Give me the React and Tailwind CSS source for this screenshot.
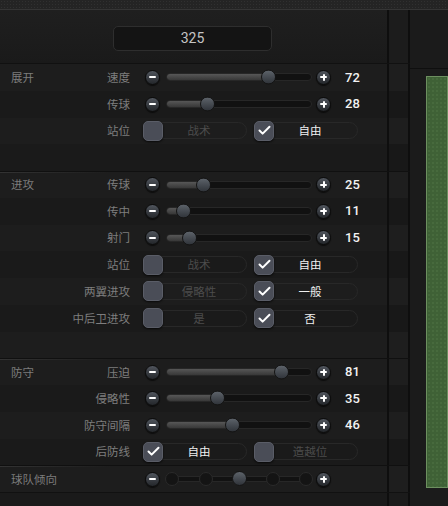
import { Check } from 'lucide-react';

const CJK = { fontFamily: '"Noto Sans CJK SC", "Noto Sans", sans-serif' };

function RoundBtn({ plus }) {
  return (
    <div className="relative w-[15px] h-[15px] rounded-full border border-[#0b0b0b] bg-gradient-to-b from-[#50555d] to-[#24272b] shadow-[0_1px_1px_rgba(0,0,0,0.6)] flex items-center justify-center shrink-0">
      <span className="absolute w-[7px] h-[2px] bg-white rounded-[1px]" />
      {plus && <span className="absolute w-[2px] h-[7px] bg-white rounded-[1px]" />}
    </div>
  );
}

function Slider({ value }) {
  const c = 2 + value * 1.4;
  return (
    <div className="flex items-center">
      <RoundBtn />
      <div className="relative ml-[6px] w-[146px] h-[8px] rounded-full bg-[#111] border border-[#272727]">
        <div className="absolute left-0 top-0 bottom-0 rounded-full bg-gradient-to-b from-[#575757] to-[#383838]" style={{ width: c }} />
        <div
          className="absolute top-1/2 -translate-y-1/2 w-[15px] h-[15px] rounded-full border border-[#141414] bg-gradient-to-b from-[#5d636a] to-[#30343a]"
          style={{ left: c - 8.5 }}
        />
      </div>
      <div className="ml-[4px]"><RoundBtn plus /></div>
      <span className="ml-[14px] text-[13px] font-medium text-[#f2f2f2]" style={{ fontFamily: 'Roboto, "Liberation Sans", sans-serif' }}>{value}</span>
    </div>
  );
}

function Option({ text, on }) {
  return (
    <div className="relative w-[104px] h-[20px] flex items-center">
      <div className="absolute inset-x-0 top-[1.5px] h-[17px] rounded-full border border-[#282828]" />
      <div className="relative w-[20px] h-[20px] rounded-[5px] bg-[#4a4d57] border border-[#5a5d67] shadow-[0_1px_2px_rgba(0,0,0,0.7)] flex items-center justify-center">
        {on && <Check size={15} strokeWidth={3.2} className="text-white" />}
      </div>
      <span className={`absolute left-[8px] right-0 text-center text-[11.5px] ${on ? 'text-[#f0f0f0]' : 'text-[#4c4c4c]'}`}>{text}</span>
    </div>
  );
}

function Toggle({ a, b, first }) {
  return (
    <div className="flex items-center gap-[7px] -ml-[2px]">
      <Option text={a} on={first} />
      <Option text={b} on={!first} />
    </div>
  );
}

function Tendency() {
  const dots = [6, 40, 73, 107, 140];
  return (
    <div className="flex items-center">
      <RoundBtn />
      <div className="relative ml-[6px] w-[146px] h-[15px]">
        <div className="absolute left-[6px] right-[6px] top-1/2 -translate-y-1/2 h-[6px] bg-[#121212] border-y border-[#272727]" />
        {dots.map(d => (
          <div key={d} className="absolute top-0 w-[14px] h-[14px] rounded-full bg-[#141414] border border-[#2a2a2a]" style={{ left: d - 7 }} />
        ))}
        <div className="absolute -top-[0.5px] w-[15px] h-[15px] rounded-full border border-[#141414] bg-gradient-to-b from-[#5d636a] to-[#30343a]" style={{ left: 73 - 7.5 }} />
      </div>
      <div className="ml-[4px]"><RoundBtn plus /></div>
    </div>
  );
}

function Row({ group, label, children, dark, top }) {
  return (
    <div className={`flex h-[26.75px] shrink-0 ${top ? 'border-t border-[#101010]' : ''}`}>
      <div className={`relative w-[387px] flex items-center ${dark ? 'bg-[#1a1a1a]' : 'bg-[#1d1d1d]'}`}>
        {top && <div className="absolute left-0 top-0 w-[110px] h-px bg-gradient-to-r from-[#333] to-transparent" />}
        <div className="w-[130px] flex items-center justify-between pl-[11px] text-[11.5px]">
          <span className="text-[#7c7c7c]">{group}</span>
          <span className="text-[#7e7e7e]">{label}</span>
        </div>
        <div className="ml-[15px]">{children}</div>
      </div>
      <div className={`w-[23px] border-x-2 border-[#0e0e0e] ${dark ? 'bg-[#181818]' : 'bg-[#1e1e1e]'}`} />
    </div>
  );
}

export default function App() {
  return (
    <div className="w-[448px] h-[506px] overflow-hidden bg-[#1b1b1b] flex flex-col" style={CJK}>
      <div className="h-[10px] bg-[#242424] bg-[radial-gradient(#303030_1px,transparent_1px)] bg-[length:3px_3px] border-b border-[#353535] shrink-0" />
      <div className="flex flex-1">
        <div className="w-[410px] flex flex-col">
          <div className="flex h-[54px] shrink-0 border-b border-[#111]">
            <div className="w-[387px] bg-gradient-to-b from-[#1f1f1f] to-[#1a1a1a] pt-[16px] pl-[113px]">
              <div className="w-[159px] h-[25px] rounded-[5px] bg-[#141414] border border-[#2e2e2e] flex items-center justify-center text-[14px] text-[#c4c4c4]" style={{ fontFamily: 'Roboto, "Liberation Sans", sans-serif' }}>325</div>
            </div>
            <div className="w-[23px] border-x-2 border-[#0e0e0e] bg-[#1c1c1c]" />
          </div>

          <Row group="展开" label="速度"><Slider value={72} /></Row>
          <Row label="传球" dark><Slider value={28} /></Row>
          <Row label="站位"><Toggle a="战术" b="自由" /></Row>
          <Row dark />

          <Row group="进攻" label="传球" top><Slider value={25} /></Row>
          <Row label="传中" dark><Slider value={11} /></Row>
          <Row label="射门"><Slider value={15} /></Row>
          <Row label="站位" dark><Toggle a="战术" b="自由" /></Row>
          <Row label="两翼进攻"><Toggle a="侵略性" b="一般" /></Row>
          <Row label="中后卫进攻" dark><Toggle a="是" b="否" /></Row>
          <Row />

          <Row group="防守" label="压迫" top><Slider value={81} /></Row>
          <Row label="侵略性" dark><Slider value={35} /></Row>
          <Row label="防守间隔"><Slider value={46} /></Row>
          <Row label="后防线" dark><Toggle a="自由" b="造越位" first /></Row>

          <Row group="球队倾向" top><Tendency /></Row>
          <div className="flex flex-1 border-t border-[#111]">
            <div className="w-[387px] bg-[#1a1a1a]" />
            <div className="w-[23px] border-x-2 border-[#0e0e0e] bg-[#1b1b1b]" />
          </div>
        </div>
        <div className="flex-1 flex flex-col bg-[#1b1b1b]">
          <div className="h-[59px] shrink-0 border-b border-[#0f0f0f]" />
          <div className="ml-[16px] mt-[7px] h-[412px] shrink-0 bg-[#3f6136] border border-[#6d8f60] bg-[radial-gradient(#476a3d_1px,transparent_1px)] bg-[length:4px_4px]" />
        </div>
      </div>
    </div>
  );
}
